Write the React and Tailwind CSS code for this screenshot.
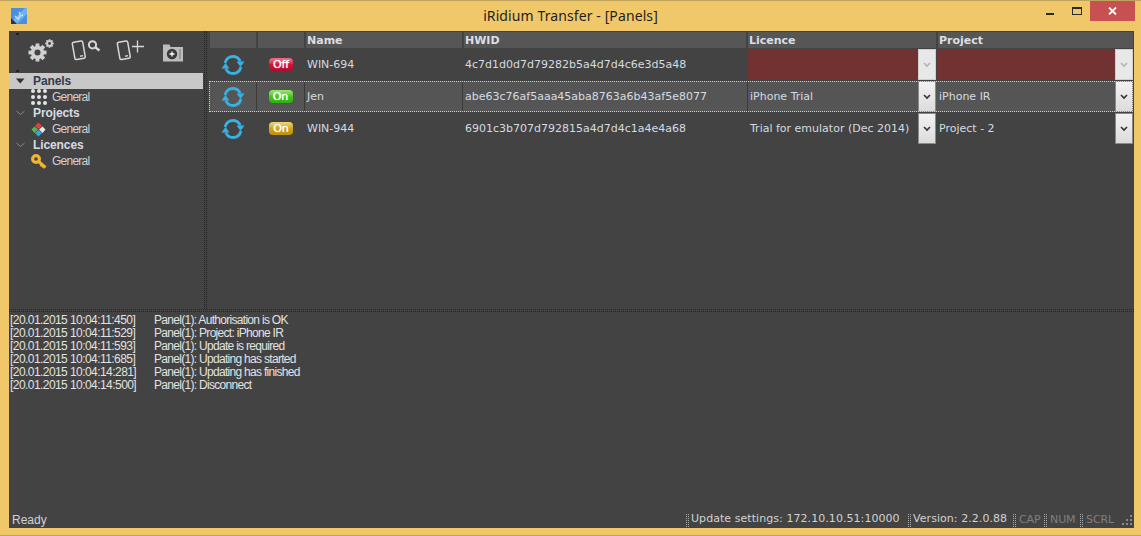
import React from "react";

const sans = "font-['Liberation_Sans',Arial,sans-serif]";
const dv = "font-['DejaVu_Sans',Verdana,sans-serif]";

function Sync() {
  return (
    <svg width="24" height="22" viewBox="0 0 24 22" fill="none">
      <path d="M4 9C5.2 4.8 8.5 2.5 12 2.5c3.2 0 5.8 1.6 7.3 5" stroke="#35b1e4" strokeWidth="2.8" />
      <path d="M20 13C18.8 17.2 15.5 19.5 12 19.5c-3.2 0-5.8-1.6-7.3-5" stroke="#35b1e4" strokeWidth="2.8" />
      <path d="M15.5 7.5h8L19.5 13z" fill="#35b1e4" />
      <path d="M0.5 14.5h8L4.5 9z" fill="#35b1e4" />
    </svg>
  );
}

function Badge({ label, cls }) {
  return (
    <div className={`w-6 h-[13px] rounded-[4px] flex items-center justify-center text-white text-[11px] leading-none [text-shadow:0_0_1px_#ffffff] ${cls} ${dv}`}>
      {label}
    </div>
  );
}

function Combo({ faded }) {
  return (
    <div className={`w-[18px] h-[31px] shrink-0 border flex items-center justify-center ${faded ? "bg-[#e8e8e8] border-[#cfcfcf]" : "bg-gradient-to-b from-[#f2f2f2] to-[#dcdcdc] border-[#8a8a8a]"}`}>
      <svg width="8" height="6" viewBox="0 0 8 6" fill="none">
        <path d="M1 1l3 3 3-3" stroke={faded ? "#b5b5b5" : "#333333"} strokeWidth="1.6" />
      </svg>
    </div>
  );
}

function HeaderCell({ w, children }) {
  return (
    <div className={`${w} h-4 bg-[#565656] pl-[1px] text-[#dcdfe4] text-[11px] font-bold leading-[17px] ${dv}`}>
      {children}
    </div>
  );
}

function Row({ selected, badge, name, hwid, licence, project, invalid }) {
  const cellBorder = selected ? "border-r border-[#3a3a3a]" : "";
  return (
    <div className={`flex h-[31px] mt-[1px] items-center text-[11px] text-[#d6dbe0] ${dv} ${selected ? "bg-[#555555] outline-1 outline-dotted -outline-offset-1 outline-[#cfcfcf]" : ""}`}>
      <div className={`w-[48px] h-full shrink-0 flex items-center justify-center ${cellBorder}`}><Sync /></div>
      <div className={`w-[48px] h-full shrink-0 flex items-center justify-center ${cellBorder}`}>{badge}</div>
      <div className={`w-[158px] h-full shrink-0 pl-[2px] pt-[2px] flex items-center ${cellBorder}`}>{name}</div>
      <div className={`w-[285px] h-full shrink-0 pl-[2px] pt-[2px] flex items-center ${cellBorder}`}>{hwid}</div>
      <div className="w-[189px] h-full shrink-0 pr-[1px] flex items-center">
        <div className={`flex-1 h-full flex items-center justify-between ${invalid ? "bg-[#723232]" : ""}`}>
          <span className="pl-[2px] pt-[2px] whitespace-nowrap">{licence}</span>
          <Combo faded={invalid} />
        </div>
      </div>
      <div className={`flex-1 h-full flex items-center justify-between ${invalid ? "bg-[#723232]" : ""}`}>
        <span className="pl-[2px] pt-[2px] whitespace-nowrap">{project}</span>
        <Combo faded={invalid} />
      </div>
    </div>
  );
}

function Gear({ size }) {
  const teeth = [0, 45, 90, 135];
  return (
    <svg width={size} height={size} viewBox="0 0 20 20">
      {teeth.map((a) => (
        <rect key={a} x="8" y="0.5" width="4" height="19" fill="#d0d0d0" transform={`rotate(${a} 10 10)`} />
      ))}
      <circle cx="10" cy="10" r="7" fill="#d0d0d0" />
      <circle cx="10" cy="10" r="3.2" fill="#444444" />
    </svg>
  );
}

function Phone() {
  return (
    <svg width="16" height="21" viewBox="0 0 16 21" fill="none">
      <rect x="2.5" y="1.5" width="10.5" height="17.5" rx="1.5" transform="rotate(-10 8 10)" stroke="#d8d8d8" strokeWidth="1.5" />
      <rect x="8" y="15.5" width="3" height="1.5" fill="#d8d8d8" transform="rotate(-10 8 10)" />
    </svg>
  );
}

function Toolbar() {
  return (
    <div className="h-[42px] flex items-start pl-[19px] pt-[9px] relative">
      <span className="absolute left-[7px] top-[2px] w-[3px] h-[2px] bg-[#222222]" />
      <span className="absolute left-[7px] top-[39px] w-[3px] h-[2px] bg-[#222222]" />
      <div className="w-[27px] h-[22px] flex items-end relative">
        <Gear size={19} />
        <div className="absolute left-[17px] top-[-1px]"><Gear size={9} /></div>
      </div>
      <div className="ml-[16px] w-[31px] flex items-start">
        <Phone />
        <svg width="15" height="14" viewBox="0 0 15 14" fill="none">
          <circle cx="5.5" cy="4.8" r="3.6" stroke="#d8d8d8" strokeWidth="2" />
          <path d="M8.5 7.5l4 3" stroke="#d8d8d8" strokeWidth="2.4" />
        </svg>
      </div>
      <div className="ml-[14px] w-[29px] flex items-start">
        <Phone />
        <svg width="13" height="14" viewBox="0 0 13 14" fill="none">
          <path d="M5.5 0.5v12M0 6.5h12" stroke="#d8d8d8" strokeWidth="1.3" />
        </svg>
      </div>
      <div className="ml-[18px] pt-[3px]">
        <svg width="20" height="19" viewBox="0 0 20 19">
          <path d="M0 1.5h6.5l1 2.5H20v14.5H0z" fill="#bdbdbd" />
          <circle cx="9" cy="11" r="5.2" fill="#3a3a3a" />
          <path d="M9 8.5v5M6.5 11h5" stroke="#ffffff" strokeWidth="1.3" />
          <path d="M17 6v10" stroke="#777777" strokeWidth="1" />
        </svg>
      </div>
    </div>
  );
}

function TreeHead({ label, open, active }) {
  return (
    <div className={`h-4 flex items-center ${active ? "bg-[#c8c8c8] text-[#333b4a]" : "text-[#d8dce4]"} text-[12px] font-bold tracking-[-0.1px] ${sans}`}>
      <div className="w-[24px] pl-[7px] flex items-center shrink-0">
        {open ? (
          <svg width="9" height="6" viewBox="0 0 9 6"><path d="M0 0.5h8.5L4.2 5.5z" fill="#333333" /></svg>
        ) : (
          <svg width="9" height="6" viewBox="0 0 9 6" fill="none"><path d="M0.5 1l4 3.6 4-3.6" stroke="#8a8a8a" strokeWidth="1" /></svg>
        )}
      </div>
      {label}
    </div>
  );
}

function TreeItem({ icon }) {
  return (
    <div className={`h-4 flex items-center text-[12px] tracking-[-0.75px] text-[#d2d2d2] ${sans}`}>
      <div className="w-[43px] pl-[22px] flex items-center justify-start shrink-0">{icon}</div>
      General
    </div>
  );
}

const Dots = () => (
  <div className="grid grid-cols-3 gap-[2px] w-4">
    {Array.from({ length: 9 }).map((_, i) => (
      <div key={i} className="w-[4px] h-[4px] rounded-[2px] bg-[#e4e4e4]" />
    ))}
  </div>
);

const Diamond = () => (
  <svg width="15" height="15" viewBox="0 0 15 15">
    <path d="M7.5 0.5L11 4 7.5 7 4 4z" fill="#e0413f" />
    <path d="M3.5 4.5L7 7.5 3.5 11 0.5 7.5z" fill="#56b848" />
    <path d="M11.5 4.5L14.5 7.5 11.5 11 8 7.5z" fill="#e8e8e8" />
    <path d="M7.5 8L11 11 7.5 14.5 4 11z" fill="#3ba5dc" />
  </svg>
);

const Key = () => (
  <svg width="16" height="15" viewBox="0 0 16 15" fill="none">
    <circle cx="5" cy="5" r="3.4" stroke="#f2b233" strokeWidth="3.2" />
    <path d="M7.5 7.5l7 6" stroke="#f2b233" strokeWidth="3" />
    <path d="M11 10.5l-1.5 2M13 12.2l-1.2 1.6" stroke="#f2b233" strokeWidth="2" />
  </svg>
);

const logs = [
  ["[20.01.2015 10:04:11:450]", "Panel(1): Authorisation is OK"],
  ["[20.01.2015 10:04:11:529]", "Panel(1): Project: iPhone IR"],
  ["[20.01.2015 10:04:11:593]", "Panel(1): Update is required"],
  ["[20.01.2015 10:04:11:685]", "Panel(1): Updating has started"],
  ["[20.01.2015 10:04:14:281]", "Panel(1): Updating has finished"],
  ["[20.01.2015 10:04:14:500]", "Panel(1): Disconnect"],
];

function Grip() {
  return <span className="inline-block w-[3px] h-[13px] shrink-0 border-x border-dotted border-[#aaaaaa]" />;
}

function Pane({ w, dim, children }) {
  return (
    <div className={`${w} shrink-0 flex items-center whitespace-nowrap`}>
      <Grip />
      <span className={dim ? "ml-[3px] text-[#7f7f7f] tracking-[-0.1px]" : "ml-[2px] mb-[1px] tracking-[0.06px]"}>{children}</span>
    </div>
  );
}

export default function App() {
  return (
    <div className={`w-[1141px] h-[536px] bg-[#f0c869] border-t border-b border-[#bfa45e] flex flex-col overflow-hidden ${sans}`}>
      <div className="h-[30px] shrink-0 flex items-start relative">
        <div className="absolute left-[11px] top-[7px]">
          <svg width="16" height="16" viewBox="0 0 16 16">
            <rect width="16" height="16" fill="#4a90e2" />
            <path d="M0 14L14 0h2v6L6 16H0z" fill="#6fb2ee" />
            <path d="M0 10l6 6H0z" fill="#22364f" />
            <path d="M4 8l3 3 2-3 3-1M8 4l1.5 2.5" stroke="#bcdcf8" strokeWidth="1.6" fill="none" />
          </svg>
        </div>
        <div className="flex-1 text-center text-[14px] tracking-[0.1px] leading-[30px] text-[#1f1f1f] font-['Noto_Sans',sans-serif]">iRidium Transfer - [Panels]</div>
        <div className="absolute right-0 top-0 flex items-start">
          <div className="w-[26px] h-[20px] flex justify-center pt-[12px]"><div className="w-[8px] h-[2px] bg-[#2a2a2a]" /></div>
          <div className="w-[26px] h-[20px] ml-[1px] flex justify-center pt-[6px]"><div className="w-[10px] h-[8px] border border-t-2 border-[#2a2a2a]" /></div>
          <div className="w-[45px] h-[20px] mr-[6px] bg-[#c75050] flex items-center justify-center">
            <svg width="9" height="8" viewBox="0 0 9 8"><path d="M1 0.5l7 7M8 0.5l-7 7" stroke="#ffffff" strokeWidth="1.8" /></svg>
          </div>
        </div>
      </div>

      <div className="flex-1 min-h-0 ml-[9px] mr-[7px] mb-[7px] bg-[#434343] flex flex-col">
        <div className="h-[278px] shrink-0 flex">
          <div className="w-[194px] shrink-0">
            <Toolbar />
            <TreeHead label="Panels" open active />
            <TreeItem icon={<Dots />} />
            <TreeHead label="Projects" />
            <TreeItem icon={<Diamond />} />
            <TreeHead label="Licences" />
            <TreeItem icon={<Key />} />
          </div>
          <div className="w-[3px] ml-[1px] mr-[2px] shrink-0 border-x border-dotted border-[#262626]" />
          <div className="flex-1 min-w-0 pt-[1px] pr-[1px]">
            <div className="flex gap-[2px] h-4 pl-[1px]">
              <HeaderCell w="w-[46px] shrink-0" />
              <HeaderCell w="w-[46px] shrink-0" />
              <HeaderCell w="w-[156px] shrink-0">Name</HeaderCell>
              <HeaderCell w="w-[282px] shrink-0">HWID</HeaderCell>
              <HeaderCell w="w-[188px] shrink-0">Licence</HeaderCell>
              <HeaderCell w="flex-1">Project</HeaderCell>
            </div>
            <Row invalid badge={<Badge label="Off" cls="bg-gradient-to-b from-[#f0708a] via-[#d81038] to-[#b00a2c]" />} name="WIN-694" hwid="4c7d1d0d7d79282b5a4d7d4c6e3d5a48" licence="" project="" />
            <Row selected badge={<Badge label="On" cls="bg-gradient-to-b from-[#9be86c] via-[#44c81a] to-[#2cb00c]" />} name="Jen" hwid="abe63c76af5aaa45aba8763a6b43af5e8077" licence="iPhone Trial" project="iPhone IR" />
            <Row badge={<Badge label="On" cls="bg-gradient-to-b from-[#f0d870] via-[#d4a416] to-[#c08f0c]" />} name="WIN-944" hwid="6901c3b707d792815a4d7d4c1a4e4a68" licence="Trial for emulator (Dec 2014)" project="Project - 2" />
          </div>
        </div>

        <div className="h-[3px] shrink-0 border-y border-dotted border-[#262626]" />

        <div className="flex-1 min-h-0 pt-[2px] pl-[1px] text-[12px] leading-[13px] text-[#e2e2e2]">
          {logs.map(([t, m]) => (
            <div key={t} className="flex h-[13px] whitespace-nowrap">
              <span className="w-[144px] shrink-0 tracking-[-0.56px]">{t}</span>
              <span className="tracking-[-0.7px]">{m}</span>
            </div>
          ))}
        </div>

        <div className={`h-[18px] shrink-0 flex items-center pl-[3px] pt-[2px] text-[11px] text-[#d2d2d2] ${dv}`}>
          <span className={`flex-1 text-[12px] ${sans}`}>Ready</span>
          <Pane w="w-[222px]">Update settings: 172.10.10.51:10000</Pane>
          <Pane w="w-[105px]">Version: 2.2.0.88</Pane>
          <Pane w="w-[31px]" dim>CAP</Pane>
          <Pane w="w-[36px]" dim>NUM</Pane>
          <Pane w="w-[36px]" dim>SCRL</Pane>
          <div className="w-[18px] shrink-0 flex justify-end pr-[1px]">
            <svg width="11" height="10" viewBox="0 0 11 10"><path d="M8 0h2v2H8zM4 4h2v2H4zM8 4h2v2H8zM0 8h2v2H0zM4 8h2v2H4zM8 8h2v2H8z" fill="#8a8a8a" /></svg>
          </div>
        </div>
      </div>
    </div>
  );
}
